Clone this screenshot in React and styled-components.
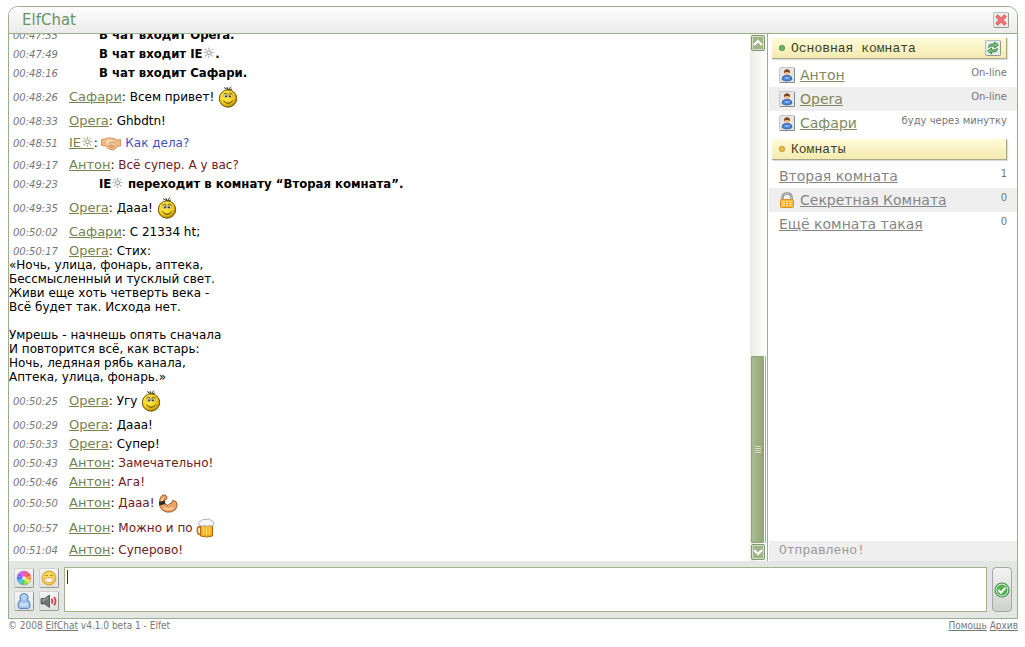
import styled, { createGlobalStyle } from "styled-components";

const sans = `"DejaVu Sans", Verdana, sans-serif`;
const condensed = `"DejaVu Sans Condensed", Tahoma, sans-serif`;
const mono = `"Liberation Mono", "Courier New", monospace`;

const messages = [
  { time: "00:47:33", system: true, text: "В чат входит Opera." },
  { time: "00:47:49", system: true, sun: true, before: "В чат входит IE", text: "." },
  { time: "00:48:16", system: true, text: "В чат входит Сафари." },
  { time: "00:48:26", author: "Сафари", text: "Всем привет! ", icon: "smile" },
  { time: "00:48:33", author: "Opera", text: "Ghbdtn!" },
  { time: "00:48:51", author: "IE", sun: true, lead: "hand", text: " Как дела?", color: "#3f51c4" },
  { time: "00:49:17", author: "Антон", text: "Всё супер. А у вас?", color: "#6e2020" },
  { time: "00:49:23", system: true, sun: true, before: "IE", text: " переходит в комнату “Вторая комната”." },
  { time: "00:49:35", author: "Opera", text: "Дааа! ", icon: "smile" },
  { time: "00:50:02", author: "Сафари", text: "C 21334 ht;" },
  {
    time: "00:50:17",
    author: "Opera",
    text: "Стих:",
    verse: `«Ночь, улица, фонарь, аптека,
Бессмысленный и тусклый свет.
Живи еще хоть четверть века -
Всё будет так. Исхода нет.

Умрешь - начнешь опять сначала
И повторится всё, как встарь:
Ночь, ледяная рябь канала,
Аптека, улица, фонарь.»`,
  },
  { time: "00:50:25", author: "Opera", text: "Угу ", icon: "smile" },
  { time: "00:50:29", author: "Opera", text: "Дааа!" },
  { time: "00:50:33", author: "Opera", text: "Супер!" },
  { time: "00:50:43", author: "Антон", text: "Замечательно!", color: "#6e2020" },
  { time: "00:50:46", author: "Антон", text: "Ага!", color: "#6e2020" },
  { time: "00:50:50", author: "Антон", text: "Дааа! ", icon: "arm", color: "#6e2020" },
  { time: "00:50:57", author: "Антон", text: "Можно и по ", icon: "beer", color: "#6e2020" },
  { time: "00:51:04", author: "Антон", text: "Суперово!", color: "#6e2020" },
];

const users = [
  { name: "Антон", status: "On-line" },
  { name: "Opera", status: "On-line" },
  { name: "Сафари", status: "буду через минутку" },
];

const rooms = [
  { name: "Вторая комната", count: 1 },
  { name: "Секретная Комната", count: 0, locked: true },
  { name: "Ещё комната такая", count: 0 },
];

/* icons */

function SmileIcon() {
  return (
    <Emote width="20" height="24" viewBox="0 0 20 24" aria-hidden="true">
      <defs>
        <radialGradient id="smile" cx="0.4" cy="0.35" r="0.7">
          <stop offset="0" stopColor="#fff36a" />
          <stop offset="0.6" stopColor="#f4d018" />
          <stop offset="1" stopColor="#a87a00" />
        </radialGradient>
      </defs>
      <path d="M6 2.500l4 2.500 3-3.500M10 5l4-1M10 5L9 2" stroke="#3a3a20" fill="none" />
      <circle cx="10" cy="13.500" r="8.700" fill="url(#smile)" stroke="#6b5510" />
      <path d="M5.500 9q2-2 4 0M10.500 9q2-2 4 0" stroke="#6b5510" strokeWidth="0.9" fill="none" />
      <ellipse cx="7.700" cy="11" rx="1.900" ry="1.700" fill="#fff" stroke="#7b6410" strokeWidth="0.5" />
      <ellipse cx="12.300" cy="11" rx="1.900" ry="1.700" fill="#fff" stroke="#7b6410" strokeWidth="0.5" />
      <circle cx="8" cy="11.200" r="0.9" fill="#111" />
      <circle cx="12" cy="11.200" r="0.9" fill="#111" />
      <path d="M5.500 15.500q1.500 2.800 4.500 2.800t4.500-2.800" stroke="#3b3008" strokeWidth="0.9" fill="none" />
    </Emote>
  );
}

function HandIcon() {
  return (
    <Emote width="20" height="20" viewBox="0 -1 20 20" aria-hidden="true">
      <path d="M.5 5.500 4 5q4-2 9-.5l3 1.500 3.500-.5v6.500l-3 .5q-2 3-5 3.500-3.500 0-7-4l-4-.5z" fill="#efb987" stroke="#d19a66" />
      <path d="M5 6.500q4-2.500 7.500 0l3 3-1 2.500-4-2-3.500 1-2-1z" fill="#f9d4aa" />
      <path d="M8 9.500l4-1.500 3.500 3M7.500 12l4.500 2M9 10.800l4.500 1.700" stroke="#bd8353" strokeWidth="0.8" fill="none" />
    </Emote>
  );
}

function ArmIcon() {
  return (
    <Emote width="20" height="19" viewBox="0 0 20 19" aria-hidden="true">
      <path
        d="M3.500 2Q5.500 0 8 1.500q1.500 1.500.8 3.500L6.500 6l.5 4 3 1.500q1.500-2.500 4-2.500l.5-2.500 3.500 1q2.500 4-.5 8-4 3.500-9 2.500-5-1-6.500-5.500Q.5 6 3.500 2z"
        fill="#eba463"
        stroke="#9c5c2c"
      />
      <path d="M4.500 4Q3.500 6 4 7M6 13.500q4.500 3.500 9 0" stroke="#fad3a4" strokeWidth="1.600" fill="none" />
      <path d="M.8 8l6-1.500.4 3.500-5.700 1.500z" fill="#2d2a2a" />
    </Emote>
  );
}

function BeerIcon() {
  return (
    <Emote width="20" height="20" viewBox="0 0 20 20" aria-hidden="true">
      <path d="M4 9H2.500Q1.500 9 1.500 11v3q0 2.500 3 2.500" stroke="#b9833e" strokeWidth="1.800" fill="none" />
      <path d="M4.500 6.500h12v11.500q-6 2-12 0z" fill="#f3a91e" stroke="#b06a14" />
      <path d="M7.500 8.500v8M10.500 8.500v8.500M13.500 8.500v8" stroke="#ffdc70" strokeWidth="1.400" />
      <path d="M3 7Q1.500 3.500 5 3q1.500-2.500 5-1.500 4-1.500 5.500 1 3.500 1 2 4.500-2 1.500-4 .5-3 1.500-5 0-3 1.500-5.500-.5z" fill="#f4f6f8" stroke="#9aa3aa" strokeWidth="0.8" />
    </Emote>
  );
}

const emotes = { smile: SmileIcon, hand: HandIcon, arm: ArmIcon, beer: BeerIcon };

function CloseIcon() {
  return (
    <svg width="14" height="14" viewBox="0 0 14 14" aria-hidden="true">
      <path d="M2.500 2.500l9 9M11.500 2.500l-9 9" stroke="#e0575c" strokeWidth="3.600" />
      <path d="M3 3l8 8M11 3l-8 8" stroke="#f0777b" strokeWidth="2" />
    </svg>
  );
}

function RefreshIcon() {
  return (
    <svg width="14" height="14" viewBox="0 0 14 14" aria-hidden="true">
      <path d="M2.500 6.500Q2.500 3 6 3h2.500V1L12.500 4 8.500 7V5.200H6.500Q4 5 2.500 6.500z" fill="#7cc47c" stroke="#2c7d39" strokeWidth="0.8" />
      <path d="M11.500 7.500Q11.500 11 8 11H5.500V13L1.500 10 5.500 7v1.800h2Q10 9 11.500 7.500z" fill="#7cc47c" stroke="#2c7d39" strokeWidth="0.8" />
    </svg>
  );
}

function UserIcon() {
  return (
    <svg width="16" height="16" viewBox="0 0 16 16" aria-hidden="true">
      <rect x="0.500" y="0.500" width="15" height="15" rx="1" fill="#e4e7e4" stroke="#c4c8c4" />
      <path d="M1 15.500h14.500V1" stroke="#838b83" fill="none" />
      <path d="M3 12.500Q3 9 6 8.500h4q3 .5 3 4-2 1.500-5 1.500t-5-1.500z" fill="#4c86dc" stroke="#2c5ba6" strokeWidth="0.8" />
      <path d="M5.500 10.500q2.500 3 5 0" fill="#9cc5fa" />
      <circle cx="8" cy="5.800" r="2.500" fill="#f2b98c" />
      <path d="M5.500 5.500Q5 2.800 8 2.800t2.500 2.700Q9.500 4.300 8 4.300T5.500 5.500z" fill="#7b3b1c" stroke="#7b3b1c" />
    </svg>
  );
}

function LockIcon() {
  return (
    <svg width="16" height="16" viewBox="0 0 16 16" aria-hidden="true">
      <path d="M3.500 8V5.500Q3.500 1.500 8 1.500t4.500 4V8" stroke="#8d8d88" strokeWidth="2.600" fill="none" />
      <path d="M3.500 8V5.500Q3.500 1.500 8 1.500t4.500 4V8" stroke="#c9c9c4" strokeWidth="1" fill="none" />
      <rect x="1.500" y="7.500" width="13" height="8" rx="1" fill="#fbb838" stroke="#dc9420" />
      <path d="M3.500 9.500h9M3.500 11.500h9M3.500 13.500h9" stroke="#ffe7a0" />
      <path d="M6.500 9v5M9.500 9v5" stroke="#eda52c" />
    </svg>
  );
}

function PaletteIcon() {
  const wedges = ["#f25c9c", "#f2584c", "#fb9f35", "#f5e84a", "#8be04c", "#3fd08a", "#3fc4ee", "#4a7cf0", "#9a5cf0", "#e05ce8"];
  const point = (i) => {
    const angle = (i / wedges.length) * Math.PI * 2 - Math.PI / 2;
    return `${8 + Math.cos(angle) * 7},${8 + Math.sin(angle) * 7}`;
  };
  return (
    <svg width="16" height="16" viewBox="0 0 16 16" aria-hidden="true">
      {wedges.map((fill, i) => (
        <path key={fill} d={`M8,8L${point(i)}A7,7 0 0 1 ${point(i + 1)}z`} fill={fill} />
      ))}
      <circle cx="8" cy="8" r="2" fill="#fff" opacity="0.6" />
      <circle cx="8" cy="8" r="7" fill="none" stroke="#a68fb5" strokeWidth="0.6" />
    </svg>
  );
}

function GrinIcon() {
  return (
    <svg width="16" height="16" viewBox="0 0 16 16" aria-hidden="true">
      <circle cx="8" cy="8" r="6.800" fill="#fcd95c" stroke="#e0a63a" strokeWidth="1.300" />
      <path d="M3.500 8h9q-.5 4.500-4.500 4.500T3.500 8z" fill="#fff" stroke="#c8983e" strokeWidth="0.8" />
      <path d="M4.500 6q1-2 2 0M9.500 6q1-2 2 0" stroke="#8a5a14" fill="none" />
    </svg>
  );
}

function PersonIcon() {
  return (
    <svg width="16" height="18" viewBox="0 0 16 18" aria-hidden="true">
      <path
        d="M8 1.500a3.800 3.800 0 0 1 3 6.300Q14 9.500 13.800 14.500q-.3 1.500-2 1.800H4.200q-1.700-.3-2-1.800Q2 9.500 5 7.800A3.800 3.800 0 0 1 8 1.500z"
        fill="#b5d2f6"
        stroke="#5d86c8"
        strokeWidth="1.200"
      />
      <path d="M4.800 8.500Q8 11 11.200 8.500" stroke="#7ea4dd" fill="none" />
      <path d="M5.500 12q2.500 2 5 0" stroke="#e8f2fe" fill="none" />
    </svg>
  );
}

function SoundIcon() {
  return (
    <svg width="18" height="16" viewBox="0 0 18 16" aria-hidden="true">
      <path d="M1 5.500h3.500L9.500 2v12.500L4.500 11H1z" fill="#6f7474" stroke="#4b5050" strokeWidth="0.800" />
      <path d="M2 7h3l3-2.500" stroke="#b4b9b9" fill="none" />
      <path d="M11.500 5.800q1.600 2.400 0 4.600M14 4q3 4.200 0 8.200" stroke="#dc3f4c" strokeWidth="1.800" fill="none" />
    </svg>
  );
}

function CheckIcon() {
  return (
    <svg width="16" height="16" viewBox="0 0 16 16" aria-hidden="true">
      <circle cx="8" cy="8" r="7" fill="#e5f4e2" stroke="#3f9440" strokeWidth="1.200" />
      <circle cx="8" cy="8" r="5.500" fill="#56b053" />
      <path d="M4.500 8l2.500 2.700 4.500-5" stroke="#fff" strokeWidth="2" fill="none" />
    </svg>
  );
}

function Chevron({ up }) {
  return (
    <svg width="10" height="8" viewBox="0 0 10 8" aria-hidden="true">
      <path d={up ? "M1 6l4-4 4 4" : "M1 2l4 4 4-4"} stroke="#fff" strokeWidth="2.200" fill="none" />
    </svg>
  );
}

function Message({ message }) {
  const { time, system, sun, before, author, text, verse, lead, icon, color } = message;
  const Lead = emotes[lead];
  const Icon = emotes[icon];

  return (
    <MessageRow>
      <Time>{time}</Time>
      {system ? (
        <SystemText>
          {before}
          {sun ? <Sun $muted>☼</Sun> : null}
          {text}
        </SystemText>
      ) : (
        <>
          <Author href="#">
            {author}
            {sun ? <Sun>☼</Sun> : null}
          </Author>
          {": "}
          {Lead ? <Lead /> : null}
          <MessageText $color={color}>{text}</MessageText>
          {Icon ? <Icon /> : null}
        </>
      )}
      {verse ? <Verse>{verse}</Verse> : null}
    </MessageRow>
  );
}

export default function App() {
  return (
    <Page>
      <GlobalStyle />
      <Window>
        <TitleBar>
          <Title>ElfChat</Title>
          <SmallButton type="button" aria-label="Закрыть">
            <CloseIcon />
          </SmallButton>
        </TitleBar>
        <Content>
          <MessageList>
            {messages.map((message) => (
              <Message key={message.time} message={message} />
            ))}
          </MessageList>
          <ScrollBar>
            <ScrollButton type="button" aria-label="Вверх">
              <Chevron up />
            </ScrollButton>
            <ScrollTrack>
              <ScrollThumb>
                <Grip />
              </ScrollThumb>
            </ScrollTrack>
            <ScrollButton type="button" aria-label="Вниз">
              <Chevron />
            </ScrollButton>
          </ScrollBar>
          <Sidebar>
            <SectionHeader>
              <Dot $color="#6fb765" />
              <SectionTitle>Основная комната</SectionTitle>
              <SmallButton type="button" aria-label="Обновить">
                <RefreshIcon />
              </SmallButton>
            </SectionHeader>
            <List>
              {users.map((user) => (
                <ListRow key={user.name}>
                  <UserIcon />
                  <UserLink href="#">{user.name}</UserLink>
                  <Note>{user.status}</Note>
                </ListRow>
              ))}
            </List>
            <SectionHeader>
              <Dot $color="#f0c040" />
              <SectionTitle>Комнаты</SectionTitle>
            </SectionHeader>
            <List>
              {rooms.map((room) => (
                <ListRow key={room.name}>
                  {room.locked ? <LockIcon /> : null}
                  <RoomLink href="#">{room.name}</RoomLink>
                  <Note>{room.count}</Note>
                </ListRow>
              ))}
            </List>
            <Status>Отправлено!</Status>
          </Sidebar>
        </Content>
        <Composer>
          <Tools>
            <ToolButton type="button" aria-label="Цвет">
              <PaletteIcon />
            </ToolButton>
            <ToolButton type="button" aria-label="Смайлики">
              <GrinIcon />
            </ToolButton>
            <ToolButton type="button" aria-label="Профиль">
              <PersonIcon />
            </ToolButton>
            <ToolButton type="button" aria-label="Звук">
              <SoundIcon />
            </ToolButton>
          </Tools>
          <Input aria-label="Сообщение" />
          <SendButton type="button" aria-label="Отправить">
            <CheckIcon />
          </SendButton>
        </Composer>
      </Window>
      <Footer>
        <span>
          © 2008 <FooterLink href="#">ElfChat</FooterLink> v4.1.0 beta 1 - Elfet
        </span>
        <span>
          <FooterLink href="#">Помощь</FooterLink> <FooterLink href="#">Архив</FooterLink>
        </span>
      </Footer>
    </Page>
  );
}

const GlobalStyle = createGlobalStyle`
* {
box-sizing: border-box;
}

body {
margin: 0;
background: #fff;
font-family: ${sans};
font-size: 12px;
color: #000;
}

button {
padding: 0;
}

svg {
flex: none;
}
`;

const Page = styled.div`
height: 100vh;
min-height: 400px;
display: flex;
flex-direction: column;
padding: 6px 7px 14px 8px;
`;

const Window = styled.main`
flex: 1;
min-height: 0;
display: flex;
flex-direction: column;
border: 1px solid #97b18b;
border-radius: 10px 10px 0 0;
overflow: hidden;
`;

const TitleBar = styled.header`
height: 27px;
flex: none;
display: flex;
align-items: center;
justify-content: space-between;
padding: 0 8px 0 13px;
border-bottom: 1px solid #97b18b;
background: linear-gradient(#fdfdfd, #ebebeb);
`;

const Title = styled.h1`
margin: 0;
font-size: 15px;
font-weight: 400;
color: #6a9462;
`;

const SmallButton = styled.button`
width: 16px;
height: 16px;
display: flex;
align-items: center;
justify-content: center;
border: 1px solid #b9bfb9;
border-right-color: #8f9a8f;
border-bottom-color: #8f9a8f;
border-radius: 2px;
background: #e9ece9;
`;

const Content = styled.div`
flex: 1;
min-height: 0;
display: flex;
`;

const MessageList = styled.section`
flex: 1;
min-width: 0;
display: flex;
flex-direction: column;
justify-content: flex-end;
overflow: hidden;
padding-bottom: 1px;
`;

const MessageRow = styled.div`
flex: none;
padding: 2px 0 3px;
line-height: 14px;
`;

const Time = styled.time`
display: inline-block;
width: 60px;
padding-left: 4px;
font-size: 10px;
font-style: italic;
line-height: 10px;
color: #777;
`;

const Author = styled.a`
font-size: 13px;
line-height: 10px;
color: #748250;
`;

const MessageText = styled.span`
color: ${({ $color }) => $color ?? "#000"};
`;

const SystemText = styled.strong`
margin-left: 30px;
font-family: ${condensed};
font-size: 13px;
line-height: 10px;
`;

const Sun = styled.span`
font-family: ${sans};
font-size: 14px;
font-weight: 400;
color: ${({ $muted }) => ($muted ? "#777" : "inherit")};
`;

const Verse = styled.div`
white-space: pre-line;
`;

const Emote = styled.svg`
vertical-align: middle;
`;

const ScrollBar = styled.div`
width: 17px;
flex: none;
display: flex;
flex-direction: column;
align-items: flex-start;
padding: 1px;
background: linear-gradient(90deg, #ebece3, #fff);
`;

const ScrollButton = styled.button`
width: 14px;
height: 16px;
flex: none;
display: flex;
align-items: center;
justify-content: center;
border: 1px solid #7f9a6a;
border-radius: 2px;
background: #a0b48a;
box-shadow: inset 0 0 0 1px #d5dfcb;
`;

const ScrollTrack = styled.div`
flex: 1;
display: flex;
flex-direction: column;
justify-content: flex-end;
padding: 1px 0;
`;

const ScrollThumb = styled.div`
width: 13px;
height: 38%;
display: flex;
align-items: center;
justify-content: center;
border: 1px solid #8da475;
border-radius: 1px;
background: linear-gradient(90deg, #a9bb95, #94a877);
box-shadow: 1px 0 0 #fff, 2px 0 0 #97b18b;
`;

const Grip = styled.div`
width: 6px;
height: 8px;
background: repeating-linear-gradient(#d7e2c8 0 1px, #94a877 1px 2px);
`;

const Sidebar = styled.aside`
width: 250px;
flex: none;
display: flex;
flex-direction: column;
border-left: 1px solid #97b18b;
padding-left: 1px;
`;

const SectionHeader = styled.div`
height: 21px;
flex: none;
display: flex;
align-items: center;
margin: 4px 10px 4px 3px;
padding: 0 5px 0 7px;
border-right: 1px solid #a9a88c;
border-bottom: 1px solid #a9a88c;
background: linear-gradient(#fffbd8, #f4ebb0);
box-shadow: 1px 1px 1px #ddd;
`;

const Dot = styled.span`
width: 6px;
height: 6px;
flex: none;
border: 1px solid #0003;
border-radius: 50%;
background: ${({ $color }) => $color};
`;

const SectionTitle = styled.h2`
flex: 1;
margin: 0 0 0 6px;
font-family: ${mono};
font-size: 13px;
font-weight: 400;
color: #3d3d2c;
`;

const List = styled.ul`
margin: 0;
padding: 0;
list-style: none;
`;

const ListRow = styled.li`
height: 24px;
display: flex;
align-items: center;
gap: 5px;
padding: 0 10px;

&:nth-child(even) {
background: #efefef;
}
`;

const UserLink = styled.a`
font-size: 14px;
color: #7c8a5e;
`;

const RoomLink = styled(UserLink)`
color: #858585;
`;

const Note = styled.span`
align-self: flex-start;
margin-left: auto;
padding-top: 3px;
font-size: 10px;
line-height: 14px;
color: #777;
`;

const Status = styled.div`
height: 20px;
flex: none;
margin-top: auto;
padding-left: 10px;
background: #efefef;
font-family: ${mono};
font-size: 13px;
line-height: 20px;
color: #999;
`;

const Composer = styled.div`
flex: none;
display: flex;
gap: 5px;
padding: 6px 5px;
background: #e3e6e3;
`;

const Tools = styled.div`
display: grid;
grid-template-columns: 20px 20px;
gap: 3px 5px;
align-content: center;
`;

const ToolButton = styled.button`
width: 20px;
height: 20px;
display: flex;
align-items: center;
justify-content: center;
border: 1px solid #d0d3d0;
border-right-color: #959a95;
border-bottom-color: #959a95;
border-radius: 2px;
background: linear-gradient(#f4f5f4, #dfe2df);
`;

const Input = styled.textarea`
flex: 1;
min-width: 0;
height: 45px;
padding: 2px;
border: 1px solid #a3b389;
outline: none;
resize: none;
background: linear-gradient(#4a3020, #4a3020) 2px 2px / 1px 14px no-repeat #fff;
font-family: ${sans};
font-size: 12px;

&:focus {
background: #fff;
}
`;

const SendButton = styled.button`
width: 20px;
display: flex;
align-items: center;
justify-content: center;
border: 1px solid #a5a9a5;
border-radius: 4px;
background: linear-gradient(#f2f2f2, #cfd1cf);
`;

const Footer = styled.footer`
flex: none;
display: flex;
justify-content: space-between;
font-family: ${condensed};
font-size: 10px;
line-height: 14px;
color: #777;
`;

const FooterLink = styled.a`
color: inherit;
`;
